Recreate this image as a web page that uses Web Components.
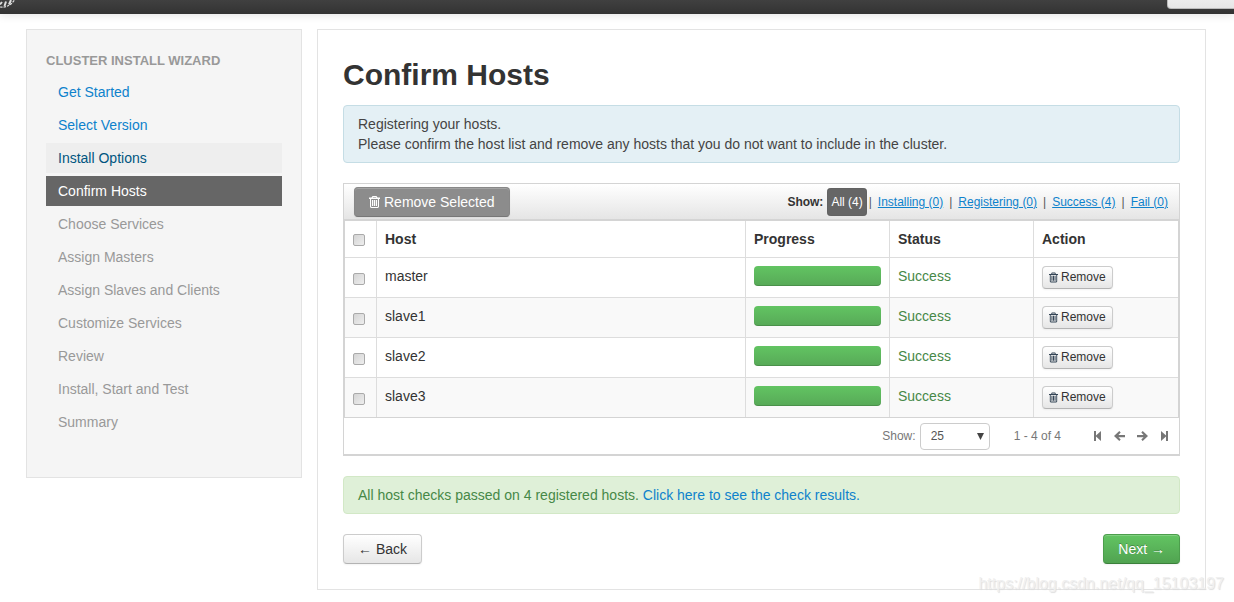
<!DOCTYPE html>
<html lang="en">
<head>
<meta charset="utf-8">
<title>Cluster Install Wizard</title>
<style>
body { margin: 0; background: #fff; color: #333; font: 14px/20px "Liberation Sans", Arial, sans-serif; }
</style>
</head>
<body>
<wizard-page>
  <top-bar slot="top"></top-bar>
  <wizard-nav slot="nav" heading="Cluster Install Wizard">
    <nav-step state="done">Get Started</nav-step>
    <nav-step state="done">Select Version</nav-step>
    <nav-step state="hover">Install Options</nav-step>
    <nav-step state="active">Confirm Hosts</nav-step>
    <nav-step>Choose Services</nav-step>
    <nav-step>Assign Masters</nav-step>
    <nav-step>Assign Slaves and Clients</nav-step>
    <nav-step>Customize Services</nav-step>
    <nav-step>Review</nav-step>
    <nav-step>Install, Start and Test</nav-step>
    <nav-step>Summary</nav-step>
  </wizard-nav>
  <span slot="title">Confirm Hosts</span>
  <alert-box>Registering your hosts.<br>Please confirm the host list and remove any hosts that you do not want to include in the cluster.</alert-box>
  <host-table hosts="master,slave1,slave2,slave3"></host-table>
  <alert-box kind="success">All host checks passed on 4 registered hosts. <text-link>Click here to see the check results.</text-link></alert-box>
  <ui-button slot="back">← Back</ui-button>
  <ui-button slot="next" kind="success">Next →</ui-button>
  <span slot="watermark">https://blog.csdn.net/qq_15103197</span>
</wizard-page>
<script>
const define = (name, html, setup) => {
  const template = document.createElement('template');
  template.innerHTML = html;
  customElements.define(name, class extends HTMLElement {
    constructor() {
      super();
      this.attachShadow({ mode: 'open' }).append(template.content.cloneNode(true));
    }
    connectedCallback() { if (setup) setup(this, this.shadowRoot); }
  });
};

const trash = `<svg viewBox="0 0 11 12" aria-hidden="true"><path fill="currentColor" fill-rule="evenodd" d="M3.500 0h4l1 1.600H11v1.400h-1v7.600c0 .8-.6 1.400-1.300 1.400H2.300C1.600 12 1 11.400 1 10.600V3H0V1.600h2.500zM4.100 1l-.4.600h3.600L6.900 1zM2.100 3v7.500c0 .3.200.5.5.5h5.800c.3 0 .5-.2.5-.5V3zM3 4h1.200v6H3zM4.900 4h1.200v6H4.900zM6.800 4H8v6H6.800z"/></svg>`;

define('wizard-page', `
<style>
:host { display: block; position: relative; }
main { display: grid; grid-template-columns: 276px minmax(0, 1fr); gap: 15px; align-items: start; padding: 15px 28px 12px 26px; }
section { border: 1px solid #e3e3e3; padding: 25px; display: grid; gap: 20px; }
header { display: block; margin-bottom: -10px; }
h1 { margin: 0; font-size: 30px; line-height: 40px; font-weight: bold; }
.body { display: grid; gap: 20px; }
footer { display: flex; justify-content: space-between; }
.mark { position: absolute; right: 10px; bottom: 8px; font-size: 16px; color: #f0f0f0; text-shadow: 1px 1px 1px #ddd; pointer-events: none; }
</style>
<slot name="top"></slot>
<main>
  <slot name="nav"></slot>
  <section>
    <header><h1><slot name="title"></slot></h1></header>
    <div class="body"><slot></slot></div>
    <footer><slot name="back"></slot><slot name="next"></slot></footer>
  </section>
</main>
<div class="mark"><slot name="watermark"></slot></div>`);

define('top-bar', `
<style>
:host { display: flex; justify-content: space-between; align-items: flex-start; height: 14px; background: linear-gradient(#404040, #333); box-shadow: 0 1px 10px rgba(0,0,0,.12); }
svg { display: block; width: 16px; height: 9px; }
button { width: 67px; height: 9px; padding: 0; border: 1px solid #bbb; border-width: 0 0 1px 1px; border-radius: 0 0 0 4px; background: linear-gradient(#ececec, #e6e6e6); }
</style>
<svg viewBox="0 0 16 9" aria-hidden="true"><g fill="none" stroke="#ddd"><path d="M0 7Q9 8 14.500 0" stroke-width="1.200" stroke-dasharray="2.500 1"/><path d="M0 4.500L2 2M4.500 6L6 1.500M9 4.500L11 0" stroke-width="2"/></g></svg>
<button type="button" aria-label="User menu"></button>`);

define('wizard-nav', `
<style>
:host { display: block; }
nav { border: 1px solid #e3e3e3; background: #f5f5f5; padding: 21px 19px 37px; }
h2 { margin: 0 0 6px; font-size: 13px; line-height: 20px; color: #999; text-transform: uppercase; }
div { display: grid; gap: 3px; padding-bottom: 3px; }
</style>
<nav><h2></h2><div><slot></slot></div></nav>`,
(el, root) => { root.querySelector('h2').textContent = el.getAttribute('heading'); });

define('nav-step', `
<style>
:host { display: block; }
a { display: block; padding: 5px 12px; color: #999; text-decoration: none; }
:host([state=done]) a { color: #0e82cc; }
:host([state=hover]) a { color: #005580; background: #eee; }
:host([state=active]) a { color: #fff; background: #666; }
</style>
<a href="#"><slot></slot></a>`);

define('text-link', `
<style>:host { display: inline; } a { color: #0e82cc; text-decoration: none; }</style>
<a href="#"><slot></slot></a>`);

define('alert-box', `
<style>
:host { display: block; padding: 8px 14px; border: 1px solid #c5dde5; border-radius: 4px; background: #e4f0f5; color: #444; }
:host([kind=success]) { border-color: #d2e8c6; background: #dff0d8; color: #468847; }
</style>
<slot></slot>`);

define('ui-button', `
<style>
:host { display: inline-block; }
button { display: flex; align-items: center; gap: 4px; margin: 0; padding: 4px 14px; font: inherit; color: #333; border: 1px solid #ccc; border-bottom-color: #b3b3b3; border-radius: 4px; background: linear-gradient(#fff, #e6e6e6); box-shadow: inset 0 1px 0 rgba(255,255,255,.2), 0 1px 2px rgba(0,0,0,.05); white-space: nowrap; }
:host([kind=success]) button { color: #fff; border-color: #4c9e4c #4c9e4c #3b803b; background: linear-gradient(#62c462, #51a351); text-shadow: 0 -1px 0 rgba(0,0,0,.25); }
:host([kind=muted]) button { color: #fff; border-color: #888 #888 #777; background: #8c8c8c; }
:host([kind=mini]) button { padding: 0 6px 1px; font-size: 12px; gap: 3px; }
svg { display: none; width: 11px; height: 12px; }
:host([icon]) svg { display: block; }
:host([kind=mini]) svg { width: 9px; height: 11px; color: #345; }
</style>
<button type="button">${trash}<slot></slot></button>`);

define('filter-bar', `
<style>
:host { display: flex; align-items: center; gap: 2px; font-size: 12px; color: #555; }
b { color: #333; margin-right: 2px; }
a { padding: 4px; color: #0e82cc; }
a.on { color: #fff; background: #666; border-radius: 4px; text-decoration: none; box-shadow: inset 0 0 1px #444; }
</style>
<b>Show:</b><a class="on" href="#">All (4)</a><span>|</span><a href="#">Installing (0)</a><span>|</span><a href="#">Registering (0)</a><span>|</span><a href="#">Success (4)</a><span>|</span><a href="#">Fail (0)</a>`);

define('table-pager', `
<style>
:host { display: flex; align-items: center; justify-content: flex-end; height: 36px; padding-right: 10px; font-size: 12px; color: #777; }
label { display: flex; align-items: center; gap: 4px; }
.pick { display: grid; align-items: center; width: 70px; }
select, .pick svg { grid-area: 1 / 1; }
select { appearance: none; box-sizing: border-box; width: 70px; height: 27px; padding: 0 10px; border: 1px solid #ccc; border-radius: 4px; background: #fff; font: inherit; color: #555; }
.pick svg { justify-self: end; width: 7px; height: 7px; margin-right: 6px; pointer-events: none; }
span { margin: 0 32px 0 24px; }
nav { display: flex; gap: 12px; }
a { display: block; color: #777; }
a svg { display: block; height: 10px; fill: currentColor; }
.end { width: 9px; } .step { width: 11px; }
</style>
<label>Show:<div class="pick"><select><option>10</option><option selected>25</option><option>50</option></select><svg viewBox="0 0 7 7"><path fill="#444" d="M0 0h7L3.500 7z"/></svg></div></label>
<span>1 - 4 of 4</span>
<nav>
<a href="#" aria-label="First"><svg class="end" viewBox="0 0 9 10"><path d="M1 0h2v4.600L8 0v10L3 5.400V10H1z"/></svg></a>
<a href="#" aria-label="Previous"><svg class="step" viewBox="0 0 11 10"><path d="M5.300 0l1.400 1.400L4.400 4H11v2.200H4.400l2.300 2.400L5.300 10 0 5z"/></svg></a>
<a href="#" aria-label="Next"><svg class="step" viewBox="0 0 11 10"><path d="M5.700 0L4.300 1.400 6.600 4H0v2.200h6.600L4.300 8.600 5.700 10 11 5z"/></svg></a>
<a href="#" aria-label="Last"><svg class="end" viewBox="0 0 9 10"><path d="M8 0H6v4.600L1 0v10l5-4.600V10h2z"/></svg></a>
</nav>`);

define('host-table', `
<style>
:host { display: block; border: 1px solid #d4d4d4; border-bottom-width: 2px; }
.bar { display: flex; align-items: center; justify-content: space-between; height: 35px; padding: 0 7px 0 10px; border-bottom: 1px solid #d4d4d4; background: linear-gradient(#fff, #e5e5e5); }
table { width: 100%; table-layout: fixed; border: 1px solid #d4d4d4; border-collapse: separate; border-spacing: 0; }
th, td { box-sizing: border-box; padding: 8px; text-align: left; vertical-align: top; line-height: 20px; border-left: 1px solid #ddd; }
th:first-child, td:first-child { border-left: 0; width: 31px; }
th:nth-child(n+3) { width: 144px; }
th:last-child { width: 145px; }
th { height: 36px; }
td { height: 40px; border-top: 1px solid #ddd; }
tbody tr:nth-child(even) td { background: #f9f9f9; }
input { appearance: none; display: block; box-sizing: border-box; width: 12px; height: 12px; margin: 5px 0 0; border: 1px solid #aaa; border-radius: 2px; background: linear-gradient(135deg, #d4d4d4, #eee); }
td input { margin-top: 7px; }
.progress { height: 20px; border-radius: 4px; background: linear-gradient(#62c462, #57a957); box-shadow: inset 0 -1px 0 rgba(0,0,0,.15); }
.ok { color: #468847; }
td ui-button { display: block; }
</style>
<div class="bar"><ui-button kind="muted" icon>Remove Selected</ui-button><filter-bar></filter-bar></div>
<table>
<thead><tr><th><input type="checkbox" aria-label="Select all hosts"></th><th>Host</th><th>Progress</th><th>Status</th><th>Action</th></tr></thead>
<tbody></tbody>
</table>
<table-pager></table-pager>`,
(el, root) => {
  root.querySelector('tbody').innerHTML = el.getAttribute('hosts').split(',').map(h => `
<tr><td><input type="checkbox" aria-label="Select ${h}"></td><td>${h}</td><td><div class="progress" role="progressbar" aria-valuenow="100"></div></td><td class="ok">Success</td><td><ui-button kind="mini" icon>Remove</ui-button></td></tr>`).join('');
});
</script>
</body>
</html>
